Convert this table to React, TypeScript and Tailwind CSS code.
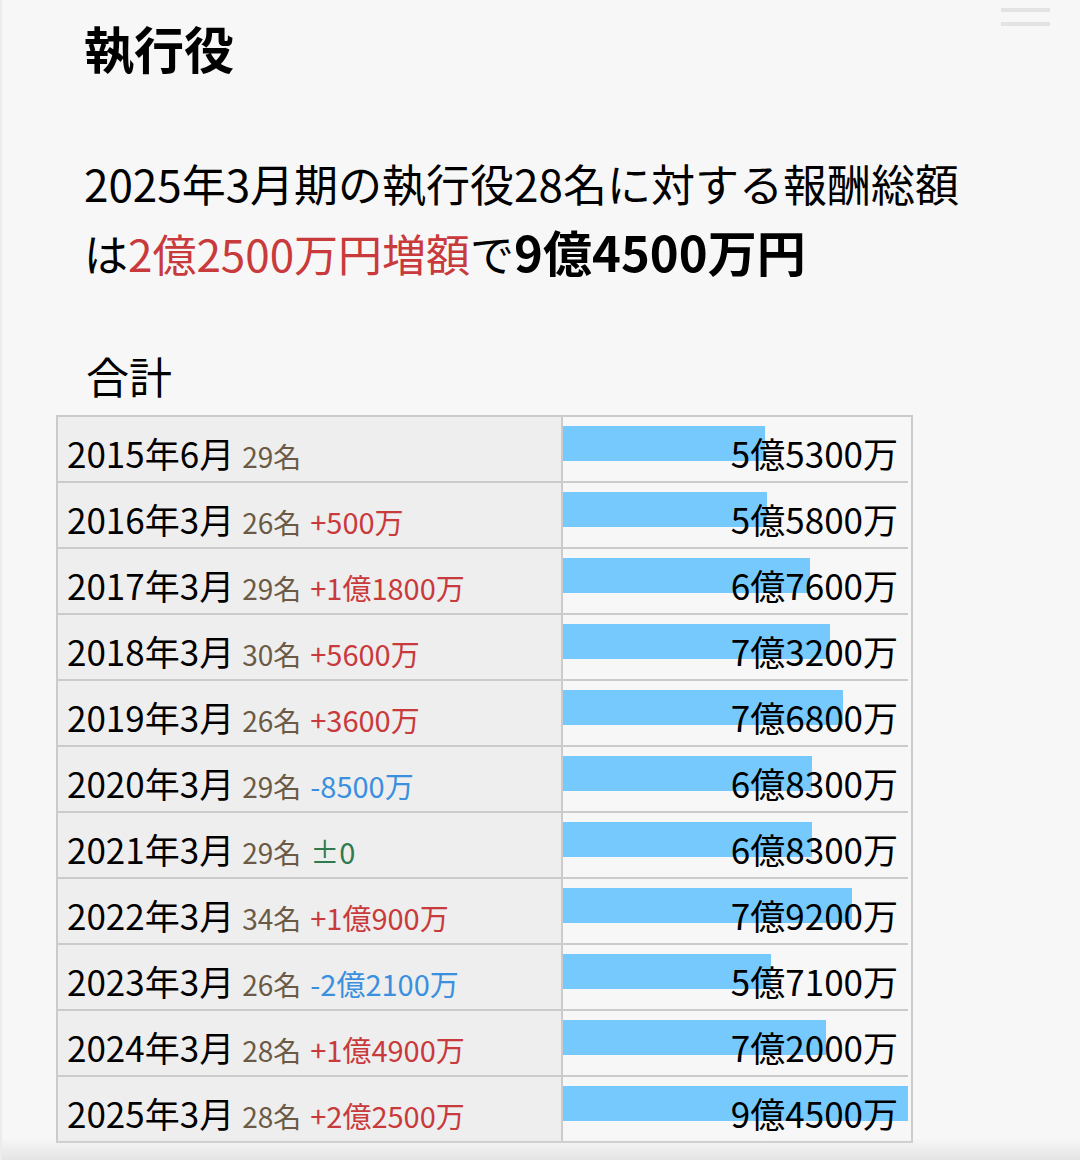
import React from "react";

type Row = {
  period: string;
  people: string;
  diff?: string;
  tone?: "up" | "down" | "flat";
  label: string;
  value: number;
};

const rows: Row[] = [
  { period: "2015年6月", people: "29名", label: "5億5300万", value: 55300 },
  { period: "2016年3月", people: "26名", diff: "+500万", tone: "up", label: "5億5800万", value: 55800 },
  { period: "2017年3月", people: "29名", diff: "+1億1800万", tone: "up", label: "6億7600万", value: 67600 },
  { period: "2018年3月", people: "30名", diff: "+5600万", tone: "up", label: "7億3200万", value: 73200 },
  { period: "2019年3月", people: "26名", diff: "+3600万", tone: "up", label: "7億6800万", value: 76800 },
  { period: "2020年3月", people: "29名", diff: "-8500万", tone: "down", label: "6億8300万", value: 68300 },
  { period: "2021年3月", people: "29名", diff: "±0", tone: "flat", label: "6億8300万", value: 68300 },
  { period: "2022年3月", people: "34名", diff: "+1億900万", tone: "up", label: "7億9200万", value: 79200 },
  { period: "2023年3月", people: "26名", diff: "-2億2100万", tone: "down", label: "5億7100万", value: 57100 },
  { period: "2024年3月", people: "28名", diff: "+1億4900万", tone: "up", label: "7億2000万", value: 72000 },
  { period: "2025年3月", people: "28名", diff: "+2億2500万", tone: "up", label: "9億4500万", value: 94500 },
];

const max = 94500;

const toneClass = {
  up: "text-[#c93a3c]",
  down: "text-[#3a90de]",
  flat: "text-[#2f7a4f]",
};

const App = () => {
  return (
    <div className="relative h-[1160px] overflow-hidden bg-[#f7f7f7] border-l-2 border-[#ececec] font-['Noto_Sans_CJK_JP','Noto_Sans',sans-serif] text-black">
      {/* menu */}
      <div className="absolute top-[8px] right-[30px] flex flex-col gap-[10px]">
        <div className="w-[49px] h-[4px] bg-[#e3e3e3]" />
        <div className="w-[49px] h-[4px] bg-[#e3e3e3]" />
      </div>

      <div className="pl-[82px] pt-[22px]">
        <h1 className="text-[50px] leading-[50px] font-bold">執行役</h1>

        <p className="mt-[78px] text-[44px] leading-[67px]">
          2025年3月期の執行役28名に対する報酬総額
          <br />
          は<span className="text-[#c93a3c]">2億2500万円増額</span>で
          <span className="text-[49px] font-bold">9億4500万円</span>
        </p>

        <p className="mt-[58px] ml-[2px] text-[43px] leading-[60px]">合計</p>
      </div>

      <div className="ml-[54px] mt-[10px] w-[857px] border-2 border-[#cbcbcb] pr-[3px]">
        {rows.map((r, i) => (
          <div
            key={r.period}
            className={
              "flex " +
              (i < rows.length - 1 ? "h-[66px] border-b-2 border-[#cbcbcb]" : "h-[64px]")
            }
          >
            <div className="w-[505px] bg-[#eeeeee] border-r-2 border-[#cbcbcb] flex items-center pt-[7px] pl-[9px] whitespace-nowrap">
              <div className="flex items-baseline">
                <span className="text-[35px] leading-none">{r.period}</span>
                <span className="ml-[8px] text-[28px] leading-none text-[#6b5a45]">
                  {r.people}
                </span>
                {r.diff && (
                  <span className={"ml-[9px] text-[29px] leading-none " + toneClass[r.tone!]}>
                    {r.diff}
                  </span>
                )}
              </div>
            </div>
            <div className="relative flex-1 flex items-center justify-end pt-[6px] pr-[10px]">
              <div
                className="absolute left-0 top-[9px] h-[35px] bg-[#76c9fd]"
                style={{ width: `${(r.value / max) * 100}%` }}
              />
              <span className="relative text-[35px] leading-none">{r.label}</span>
            </div>
          </div>
        ))}
      </div>

      {/* bottom shade */}
      <div className="absolute left-0 right-0 bottom-0 h-[22px] bg-gradient-to-b from-transparent to-[#e4e4e4]" />
    </div>
  );
};

export default App;
